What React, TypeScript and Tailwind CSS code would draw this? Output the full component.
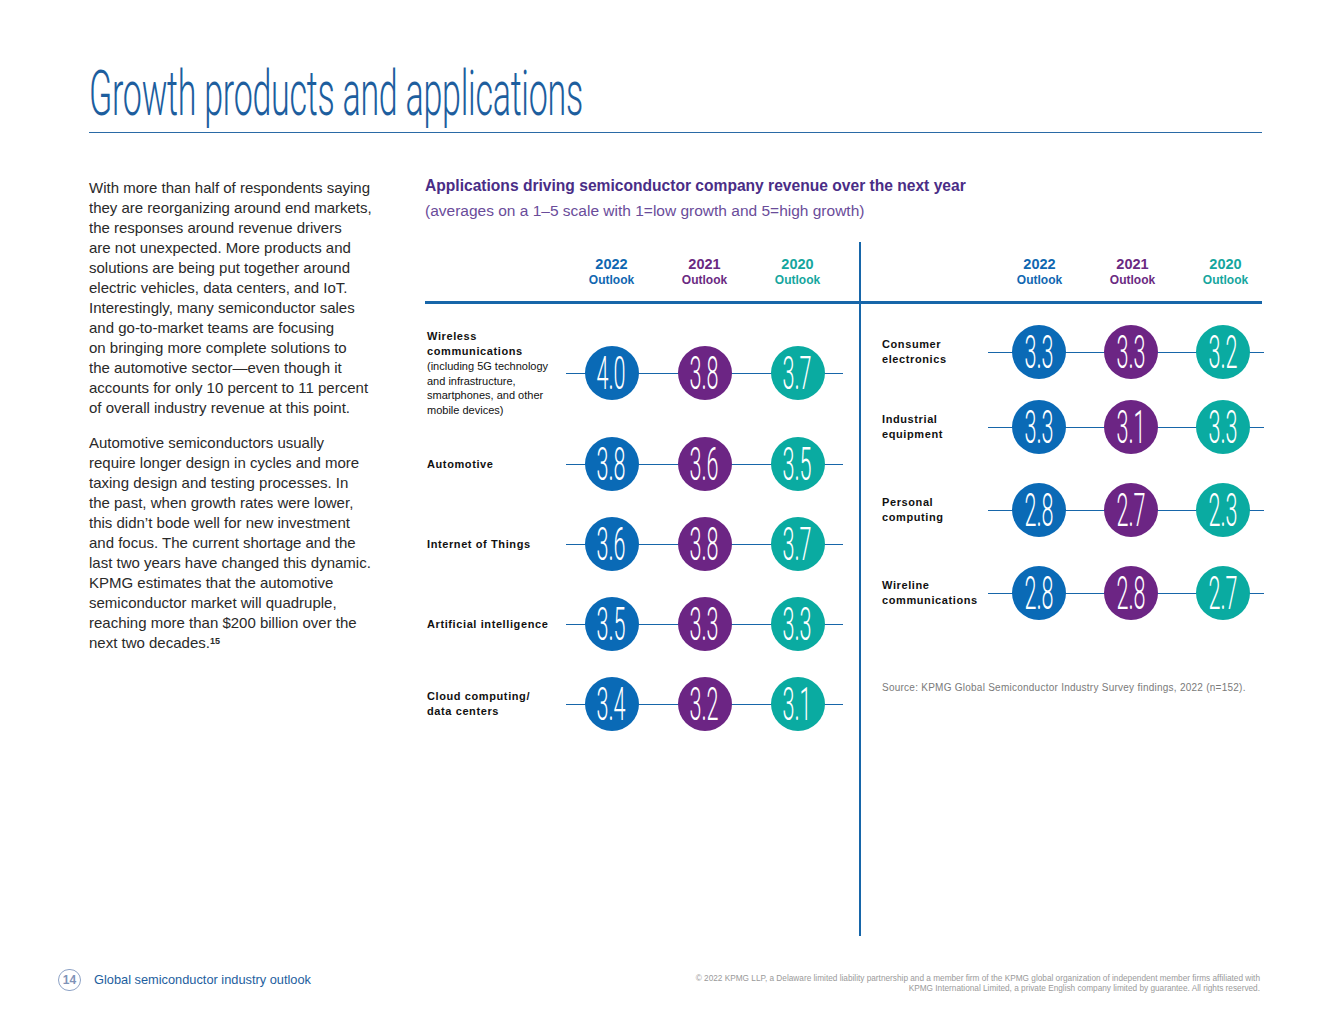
const BLUE = "bg-[#0a6ab6]";
const PURPLE = "bg-[#6c2584]";
const TEAL = "bg-[#0aaba1]";

const para1 = [
  "With more than half of respondents saying",
  "they are reorganizing around end markets,",
  "the responses around revenue drivers",
  "are not unexpected. More products and",
  "solutions are being put together around",
  "electric vehicles, data centers, and IoT.",
  "Interestingly, many semiconductor sales",
  "and go-to-market teams are focusing",
  "on bringing more complete solutions to",
  "the automotive sector\u2014even though it",
  "accounts for only 10 percent to 11 percent",
  "of overall industry revenue at this point.",
];

const para2 = [
  "Automotive semiconductors usually",
  "require longer design in cycles and more",
  "taxing design and testing processes. In",
  "the past, when growth rates were lower,",
  "this didn\u2019t bode well for new investment",
  "and focus. The current shortage and the",
  "last two years have changed this dynamic.",
  "KPMG estimates that the automotive",
  "semiconductor market will quadruple,",
  "reaching more than $200 billion over the",
];

type Row = {
  title: string[];
  note?: string[];
  values: [string, string, string];
  mt: string;
};

const leftRows: Row[] = [
  {
    title: ["Wireless", "communications"],
    note: ["(including 5G technology", "and infrastructure,", "smartphones, and other", "mobile devices)"],
    values: ["4.0", "3.8", "3.7"],
    mt: "mt-[42px]",
  },
  { title: ["Automotive"], values: ["3.8", "3.6", "3.5"], mt: "mt-[37px]" },
  { title: ["Internet of Things"], values: ["3.6", "3.8", "3.7"], mt: "mt-[26px]" },
  { title: ["Artificial intelligence"], values: ["3.5", "3.3", "3.3"], mt: "mt-[26px]" },
  { title: ["Cloud computing/", "data centers"], values: ["3.4", "3.2", "3.1"], mt: "mt-[26px]" },
];

const rightRows: Row[] = [
  { title: ["Consumer", "electronics"], values: ["3.3", "3.3", "3.2"], mt: "mt-[21px]" },
  { title: ["Industrial", "equipment"], values: ["3.3", "3.1", "3.3"], mt: "mt-[21px]" },
  { title: ["Personal", "computing"], values: ["2.8", "2.7", "2.3"], mt: "mt-[29px]" },
  { title: ["Wireline", "communications"], values: ["2.8", "2.8", "2.7"], mt: "mt-[29px]" },
];

const Circle = ({ value, color }: { value: string; color: string }) => (
  <div className={`${color} w-[54px] h-[54px] rounded-full flex items-center justify-center overflow-visible relative`}>
    <span className="font-['Roboto',sans-serif] font-light text-white text-[46px] leading-none scale-x-[0.47] whitespace-nowrap">
      {value}
    </span>
  </div>
);

const Header = ({ pl }: { pl: string }) => (
  <div className={`h-[62px] border-b-[3px] border-[#1766a9] ${pl} pt-[14px] flex`}>
    {[
      ["2022", "text-[#0f67b1]"],
      ["2021", "text-[#6a2a82]"],
      ["2020", "text-[#14a69e]"],
    ].map(([year, color]) => (
      <div key={year} className={`w-[93px] shrink-0 flex flex-col items-center ${color}`}>
        <span className="text-[14.5px] font-bold leading-[16px]">{year}</span>
        <span className="text-[12px] font-bold leading-[17px]">Outlook</span>
      </div>
    ))}
  </div>
);

const ChartRow = ({ row, labelW, lineLeft, lineW, cellW }: { row: Row; labelW: string; lineLeft: string; lineW: string; cellW: string }) => (
  <div className={`flex items-center h-[54px] ${row.mt}`}>
    <div className={`${labelW} shrink-0 text-[11px] text-[#111]`}>
      {row.title.map((t) => (
        <div key={t} className="font-bold tracking-[0.6px] leading-[15px] whitespace-nowrap">
          {t}
        </div>
      ))}
      {row.note?.map((t) => (
        <div key={t} className="leading-[14.5px] whitespace-nowrap">
          {t}
        </div>
      ))}
    </div>
    <div className="relative flex items-center">
      <div className={`absolute ${lineLeft} ${lineW} top-1/2 h-px bg-[#1766a9]`} />
      {row.values.map((v, i) => (
        <div key={i} className={`${cellW} shrink-0 flex justify-center relative`}>
          <Circle value={v} color={[BLUE, PURPLE, TEAL][i]} />
        </div>
      ))}
    </div>
  </div>
);

export default function App() {
  return (
    <div className="w-[1320px] h-[1020px] bg-white flex flex-col font-['Liberation_Sans',Arial,sans-serif] overflow-hidden">
      <div className="pl-[89px] pr-[58px]">
        <h1 className="pt-[62px] h-[125px] text-[63px] leading-[63px] text-[#1d5e9e] font-['Roboto',sans-serif] font-light whitespace-nowrap">
          <span className="inline-block origin-left scale-x-[0.54] tracking-[-0.5px]">Growth products and applications</span>
        </h1>
        <div className="mt-[7px] h-px bg-[#2a6aa6]" />
      </div>

      <div className="flex pl-[89px] pt-[45px] gap-[46px]">
        <div className="w-[290px] text-[15px] leading-[20px] text-[#2a2a2a]">
          <p>
            {para1.map((l) => (
              <span key={l} className="block whitespace-nowrap">{l}</span>
            ))}
          </p>
          <p className="mt-[15px]">
            {para2.map((l) => (
              <span key={l} className="block whitespace-nowrap">{l}</span>
            ))}
            <span className="block whitespace-nowrap">
              next two decades.<sup className="text-[9px] font-bold">15</sup>
            </span>
          </p>
        </div>

        <div className="w-[837px] -mt-[2px]">
          <h2 className="text-[15.6px] leading-[20px] font-bold text-[#4a2d86] whitespace-nowrap">
            Applications driving semiconductor company revenue over the next year
          </h2>
          <p className="mt-[5px] text-[15.5px] leading-[20px] text-[#6a4c9a] whitespace-nowrap">
            (averages on a 1&ndash;5 scale with 1=low growth and 5=high growth)
          </p>

          <div className="flex mt-[21px]">
            <div className="w-[434px] shrink-0">
              <Header pl="pl-[140px]" />
              {leftRows.map((r) => (
                <ChartRow key={r.title[0]} row={r} labelW="w-[140px] pl-[2px]" lineLeft="left-[1px]" lineW="w-[277px]" cellW="w-[93px]" />
              ))}
            </div>
            <div className="w-[2px] h-[694px] bg-[#1766a9] shrink-0" />
            <div className="w-[401px] shrink-0">
              <Header pl="pl-[132px]" />
              {rightRows.map((r) => (
                <ChartRow key={r.title[0]} row={r} labelW="w-[132px] pl-[21px]" lineLeft="-left-[5px]" lineW="w-[276px]" cellW="w-[92px]" />
              ))}
              <p className="mt-[62px] pl-[21px] text-[10px] leading-[12px] tracking-[0.25px] text-[#7a7a7a] whitespace-nowrap">
                Source: KPMG Global Semiconductor Industry Survey findings, 2022 (n=152).
              </p>
            </div>
          </div>
        </div>
      </div>

      <div className="mt-auto pb-[26px] pl-[58px] pr-[60px] flex items-start justify-between">
        <div className="flex items-center gap-[13px]">
          <div className="w-[23px] h-[22px] rounded-full border border-[#8ea3c6] flex items-center justify-center text-[12px] font-bold text-[#7f93b8]">
            14
          </div>
          <span className="text-[12.8px] text-[#1d5e9e]">Global semiconductor industry outlook</span>
        </div>
        <p className="mt-[5px] text-[8.25px] leading-[10px] text-[#9a9a9a] text-right whitespace-nowrap">
          &copy; 2022 KPMG LLP, a Delaware limited liability partnership and a member firm of the KPMG global organization of independent member firms affiliated with
          <br />
          KPMG International Limited, a private English company limited by guarantee. All rights reserved.
        </p>
      </div>
    </div>
  );
}
